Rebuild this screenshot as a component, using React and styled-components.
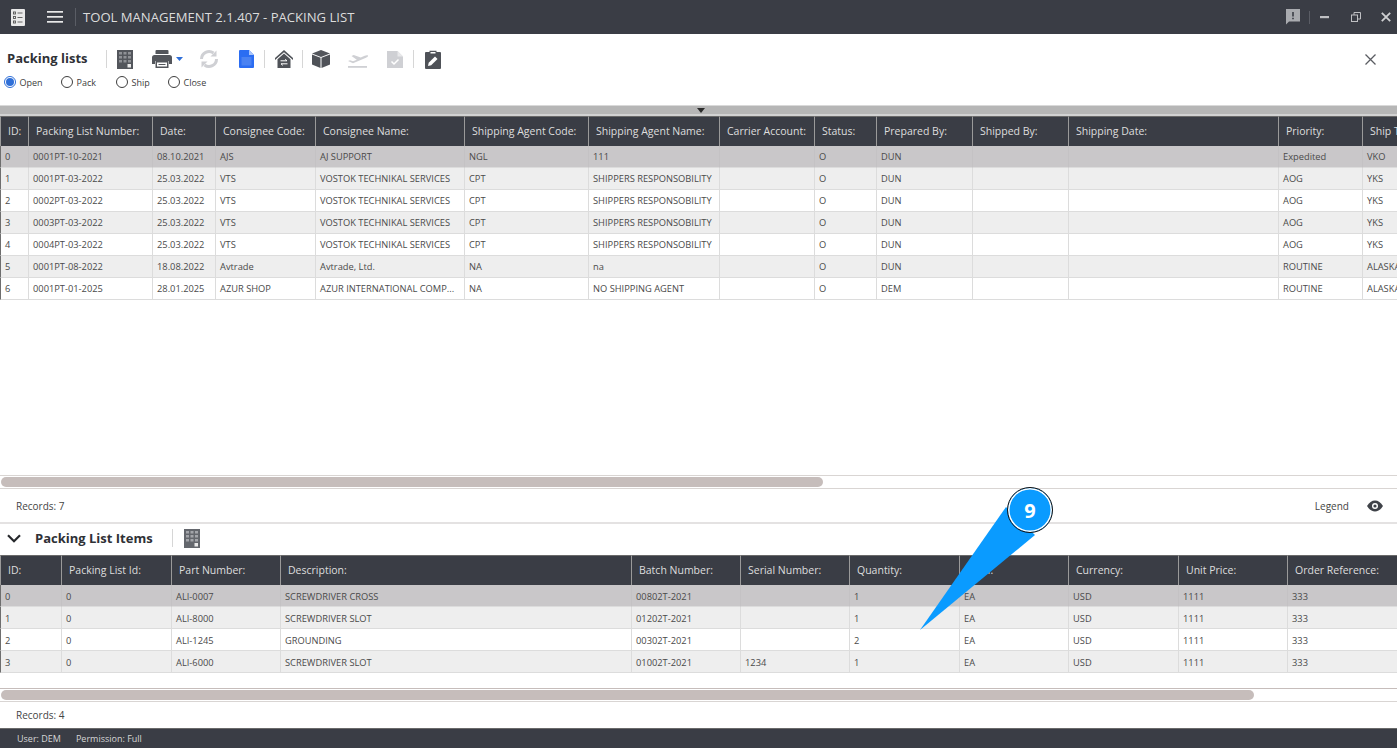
import React from "react";
import styled, { createGlobalStyle } from "styled-components";

const Global = createGlobalStyle`
  html, body { margin: 0; padding: 0; background: #fff; overflow: hidden; }
  body { font-family: "Open Sans", "Noto Sans", "Liberation Sans", sans-serif; }
  * { box-sizing: border-box; }
`;

const Page = styled.div`
  position: relative;
  width: 1397px;
  height: 750px;
  display: flex;
  flex-direction: column;
  overflow: hidden;
`;

const TitleBar = styled.header`
  height: 34px;
  flex: none;
  background: #3a3d45;
  display: flex;
  align-items: center;
  padding-left: 11px;
  color: #dcdcdc;
`;
const TitleText = styled.div`
  font-size: 13.1px;
  margin-left: 7px;
  white-space: nowrap;
`;
const BarSep = styled.span`
  width: 1px;
  height: ${(p) => p.$h || 18}px;
  background: ${(p) => p.$c || "#5a5d65"};
  margin: 0 ${(p) => p.$mr ?? 0}px 0 ${(p) => p.$ml ?? 0}px;
  flex: none;
`;
const WinControls = styled.div`
  margin-left: auto;
  display: flex;
  align-items: center;
  padding-right: 6px;
`;

const Toolbar = styled.section`
  height: 71px;
  flex: none;
  display: flex;
  flex-direction: column;
`;
const ToolRow = styled.div`
  display: flex;
  align-items: center;
  height: 20px;
  margin-top: 15px;
  padding-left: 7px;
`;
const PanelTitle = styled.h2`
  margin: 0 0 2px;
  font-size: 13px;
  line-height: 18px;
  font-weight: 700;
  color: #2f3136;
  white-space: nowrap;
  width: 99px;
`;
const Tool = styled.span`
  display: inline-flex;
  align-items: center;
  flex: none;
  margin-left: ${(p) => p.$ml || 0}px;
`;
const ToolSep = styled.span`
  width: 1px;
  height: 18px;
  background: #d6d6d6;
  flex: none;
  margin-left: ${(p) => p.$ml || 0}px;
`;
const CloseBtn = styled.span`
  margin-left: auto;
  margin-right: 21px;
  display: inline-flex;
`;
const RadioRow = styled.div`
  display: flex;
  align-items: center;
  padding-left: 4px;
  margin-top: 6px;
  height: 14px;
`;
const RadioItem = styled.label`
  display: inline-flex;
  align-items: center;
  width: ${(p) => p.$w}px;
  font-size: 9px;
  color: #3d3d3d;
  gap: 3.5px;
`;
const RadioDot = styled.span`
  width: 12px;
  height: 12px;
  border-radius: 50%;
  border: 1px solid ${(p) => (p.$on ? "#2f6fd8" : "#3e3e3e")};
  background: #fff;
  display: inline-flex;
  align-items: center;
  justify-content: center;
  flex: none;
  &::after {
    content: "";
    width: 8px;
    height: 8px;
    border-radius: 50%;
    background: ${(p) => (p.$on ? "#2f6fd8" : "transparent")};
  }
`;

const Splitter = styled.div`
  height: 11px;
  flex: none;
  background: #b6b6b6;
  border-top: 1px solid #d9d9d9;
  border-bottom: 2px solid #d2d2d2;
  display: flex;
  justify-content: center;
  align-items: center;
  padding-left: 4px;
`;
const Caret = styled.span`
  width: 0;
  height: 0;
  border-left: 4px solid transparent;
  border-right: 4px solid transparent;
  border-top: 5px solid #2b2b2b;
`;

const TableBox = styled.div`
  height: ${(p) => p.$h}px;
  flex: none;
  overflow: hidden;
`;
const GridRow = styled.div`
  display: grid;
  grid-template-columns: ${(p) => p.$cols};
  width: max-content;
`;
const HeadRow = styled(GridRow)`
  height: 30px;
  background: #3a3d45;
`;
const HeadCell = styled.div`
  border-left: 1px solid #9a9a9a;
  border-top: 1px solid #6a6a6a;
  padding-left: 7px;
  font-size: 10.5px;
  line-height: 29px;
  color: #dedede;
  white-space: nowrap;
  overflow: hidden;
`;
const BodyRow = styled(GridRow)`
  height: 22px;
  background: ${(p) => (p.$sel ? "#c9c7c9" : p.$odd ? "#eeeeee" : "#ffffff")};
`;
const BodyCell = styled.div`
  border-left: 1px solid ${(p) => (p.$first ? "#6e6e6e" : p.$sel ? "#c4c2c4" : "#dcdcdc")};
  border-bottom: 1px solid #dcdcdc;
  padding: ${(p) => p.$top}px 0 0 4px;
  font-size: 9.3px;
  line-height: 21px;
  color: #4a4a4a;
  white-space: nowrap;
  overflow: hidden;
`;

const Track = styled.div`
  height: ${(p) => p.$h}px;
  flex: none;
  border-top: 1px solid ${(p) => p.$edge};
  border-bottom: 1px solid #d9d5d3;
  padding: 1px 0 1px 1px;
`;
const Thumb = styled.div`
  height: 100%;
  width: ${(p) => p.$w}px;
  background: #c6bdbb;
  border-radius: 6px;
`;
const RecordsBar = styled.div`
  height: ${(p) => p.$h}px;
  flex: none;
  display: flex;
  align-items: center;
  padding: 0 14px 0 16px;
  font-size: 10px;
  color: #454545;
`;
const Legend = styled.div`
  margin-left: auto;
  display: flex;
  align-items: center;
  gap: 18px;
`;
const SectionHead = styled.div`
  height: 33px;
  flex: none;
  border-top: 2px solid #e4e2e2;
  display: flex;
  align-items: center;
  padding: 0 0 3px 7px;
`;
const SectionTitle = styled.h3`
  margin: 0 0 0 14px;
  font-size: 13px;
  font-weight: 700;
  color: #2f3136;
  white-space: nowrap;
  width: 137px;
`;
const Spacer = styled.div`
  height: ${(p) => p.$h}px;
  flex: none;
`;
const StatusBar = styled.footer`
  height: 20px;
  flex: none;
  background: #3a3d45;
  border-top: 1px solid #6a6a6a;
  display: flex;
  align-items: center;
  padding-left: 17px;
  gap: 15px;
  font-size: 9px;
  color: #d6d6d6;
`;

const Callout = styled.div`
  position: absolute;
  left: 915px;
  top: 485px;
  width: 142px;
  height: 150px;
`;
const CalloutBadge = styled.div`
  position: absolute;
  left: 92px;
  top: 2px;
  width: 46px;
  height: 46px;
  border-radius: 50%;
  background: #0a9bff;
  border: 1px solid #111;
  box-shadow: inset 0 0 0 1.5px #fff;
  color: #fff;
  font-size: 20px;
  font-weight: 700;
  display: flex;
  align-items: center;
  justify-content: center;
`;

/* ---------- icons ---------- */
const ExcelIcon = ({ fill = "#53565c", cell = "#8f9196" }) => (
  <svg width="16" height="19" viewBox="0 0 16 19">
    <rect width="16" height="19" fill={fill} />
    <g fill={cell}>
      <rect x="2" y="2" width="3" height="2.5" /><rect x="6.500" y="2" width="3" height="2.5" /><rect x="11" y="2" width="3" height="2.5" />
      <rect x="2" y="6" width="3" height="2.5" /><rect x="6.500" y="6" width="3" height="2.5" /><rect x="11" y="6" width="3" height="2.5" />
      <rect x="2" y="10" width="3" height="2.5" /><rect x="6.500" y="10" width="3" height="2.5" /><rect x="11" y="10" width="3" height="2.5" />
    </g>
    <path d="M10.500 14h3.500v3.500h-3.500z" fill="#e8e8e8" />
  </svg>
);
const Printer = () => (
  <svg width="32" height="18" viewBox="0 0 32 18">
    <path d="M3.500 1a1 1 0 0 1 1-1h11a1 1 0 0 1 1 1v3h-13z" fill="#53565c" />
    <path d="M2.500 5h15a2.500 2.500 0 0 1 2.500 2.500V14h-3v-3H3v3H0V7.500A2.500 2.500 0 0 1 2.500 5z" fill="#53565c" />
    <path d="M3.500 11h13v7h-13z" fill="#53565c" />
    <path d="M5 12.500h10v4H5z" fill="#fff" />
    <path d="M6.500 14.500h7" stroke="#53565c" />
    <path d="M24 7h7l-3.500 4z" fill="#2f6fd8" />
  </svg>
);
const Refresh = () => (
  <svg width="20" height="20" viewBox="0 0 20 20" fill="none">
    <path d="M2.500 10a7.500 7.500 0 0 1 12-6" stroke="#cfd0d4" strokeWidth="3" />
    <path d="M17.500 10a7.500 7.500 0 0 1-12 6" stroke="#cfd0d4" strokeWidth="3" />
    <path d="M17.500 1.500v6h-6z" fill="#cfd0d4" />
    <path d="M2.500 18.500v-6h6z" fill="#cfd0d4" />
  </svg>
);
const BlueDoc = () => (
  <svg width="15" height="18" viewBox="0 0 15 18">
    <path d="M0 1a1 1 0 0 1 1-1h9l5 5v12a1 1 0 0 1-1 1H1a1 1 0 0 1-1-1z" fill="#2b6df2" />
    <path d="M2.500 7h10v8.500h-10z" fill="#4a82f2" />
    <path d="M10 0l5 5h-5z" fill="#a9c5fa" />
  </svg>
);
const HomeSwap = () => (
  <svg width="18" height="18" viewBox="0 0 18 18">
    <path d="M9 0L18 8v2L9 2.200 0 10V8z" fill="#4f5258" />
    <path d="M9 3.500l6.500 5.700V18h-13V9.200z" fill="#4f5258" />
    <path d="M5.500 10.800h6.500M12 10.800l-1.800-1.500M12.500 13.800H6M6 13.800l1.800 1.500" stroke="#fff" strokeWidth="1" fill="none" />
  </svg>
);
const Box = () => (
  <svg width="18" height="18" viewBox="0 0 18 18">
    <path d="M9 0l9 3.500L9 7 0 3.500z" fill="#53565c" />
    <path d="M0 4.500l8.500 3.300V18L0 14.600z" fill="#4f5258" />
    <path d="M18 4.500L9.500 7.800V18L18 14.600z" fill="#4f5258" />
  </svg>
);
const Plane = () => (
  <svg width="20" height="17" viewBox="0 0 20 17">
    <path d="M0 10l2-.8 3 1.100 3.800-1.600L3.500 5l2.200-.9 7 2.500 4-1.800C18 4.200 19.500 4 20 4.600c.2.700-.7 1.500-2 2.100L5 12.300z" fill="#cfd0d4" />
    <rect x="0" y="15" width="19" height="1.800" fill="#cfd0d4" />
  </svg>
);
const DocCheck = () => (
  <svg width="16" height="17" viewBox="0 0 16 17">
    <path d="M0 0h10.500L16 5.500V17H0z" fill="#cfd0d4" />
    <path d="M10.500 0L16 5.500h-5.500z" fill="#e8e8ea" />
    <path d="M4.500 10.500l2.500 2.500 4.500-4.500" stroke="#fff" strokeWidth="1.500" fill="none" />
  </svg>
);
const Clip = () => (
  <svg width="16" height="19" viewBox="0 0 16 19">
    <path d="M1 2h3.500V.8h7V2H15a1 1 0 0 1 1 1v15a1 1 0 0 1-1 1H1a1 1 0 0 1-1-1V3a1 1 0 0 1 1-1z" fill="#4f5258" />
    <path d="M5.500 2h5v1.500h-5z" fill="#fff" />
    <path d="M3 16l.7-3.200 6.300-6.300 2.500 2.500L6.200 15.300z" fill="#fff" />
  </svg>
);
const AppIcon = () => (
  <svg width="14" height="17" viewBox="0 0 14 17">
    <rect width="14" height="17" rx="1" fill="#e9e9e9" />
    <g stroke="#555" strokeWidth=".9" fill="none">
      <rect x="2.500" y="3" width="2" height="2" /><rect x="2.500" y="7.500" width="2" height="2" /><rect x="2.500" y="12" width="2" height="2" />
      <path d="M6.500 4h5M6.500 8.500h5M6.500 13h5" />
    </g>
  </svg>
);
const Burger = () => (
  <svg width="16" height="12" viewBox="0 0 16 12" fill="#e8e8e8">
    <rect width="16" height="1.700" /><rect y="5" width="16" height="1.700" /><rect y="10" width="16" height="1.700" />
  </svg>
);
const Chat = () => (
  <svg width="14" height="16" viewBox="0 0 14 16">
    <path d="M0 0h14v12.500H3L0 15.500z" fill="#a9abaf" />
    <path d="M6.200 3h1.600v4.500H6.200zM6.200 8.700h1.600v1.600H6.200z" fill="#3a3d45" />
  </svg>
);
const Minim = () => (
  <svg width="9" height="3" viewBox="0 0 9 3"><rect width="9" height="2.200" fill="#bfc0c3" /></svg>
);
const Restore = () => (
  <svg width="10" height="10" viewBox="0 0 10 10" fill="none" stroke="#bfc0c3" strokeWidth="1">
    <rect x=".5" y="3" width="6" height="6.500" />
    <path d="M3 3V.5h6.500V7H6.500" />
  </svg>
);
const WinX = () => (
  <svg width="10" height="10" viewBox="0 0 10 10" stroke="#cfd0d2" strokeWidth="1.800">
    <path d="M.8.8l8.400 8.400M9.200.8L.8 9.200" />
  </svg>
);
const PanelX = () => (
  <svg width="11" height="11" viewBox="0 0 11 11" stroke="#5a5c62" strokeWidth="1.300">
    <path d="M.5.500l10 10M10.500.500l-10 10" />
  </svg>
);
const Eye = () => (
  <svg width="16" height="12" viewBox="0 0 16 12">
    <path d="M0 6c2-3.500 5-5.500 8-5.500S14 2.500 16 6c-2 3.500-5 5.500-8 5.500S2 9.500 0 6z" fill="#3f4248" />
    <circle cx="8" cy="6" r="3" fill="#fff" />
    <circle cx="8" cy="6" r="1.600" fill="#3f4248" />
  </svg>
);
const Chevron = () => (
  <svg width="14" height="9" viewBox="0 0 14 9" fill="none" stroke="#26282c" strokeWidth="2.200">
    <path d="M1 1.200l6 6 6-6" />
  </svg>
);

/* ---------- data ---------- */
const listCols = "28px 124px 63px 100px 149px 124px 131px 95px 62px 96px 96px 210px 84px 120px";
const listHead = ["ID:", "Packing List Number:", "Date:", "Consignee Code:", "Consignee Name:", "Shipping Agent Code:", "Shipping Agent Name:", "Carrier Account:", "Status:", "Prepared By:", "Shipped By:", "Shipping Date:", "Priority:", "Ship To:"];
const vts = ["25.03.2022", "VTS", "VOSTOK TECHNIKAL SERVICES", "CPT", "SHIPPERS RESPONSOBILITY", "", "O", "DUN", "", "", "AOG", "YKS"];
const listRows = [
  ["0", "0001PT-10-2021", "08.10.2021", "AJS", "AJ SUPPORT", "NGL", "111", "", "O", "DUN", "", "", "Expedited", "VKO"],
  ["1", "0001PT-03-2022", ...vts],
  ["2", "0002PT-03-2022", ...vts],
  ["3", "0003PT-03-2022", ...vts],
  ["4", "0004PT-03-2022", ...vts],
  ["5", "0001PT-08-2022", "18.08.2022", "Avtrade", "Avtrade, Ltd.", "NA", "na", "", "O", "DUN", "", "", "ROUTINE", "ALASKA"],
  ["6", "0001PT-01-2025", "28.01.2025", "AZUR SHOP", "AZUR INTERNATIONAL COMP...", "NA", "NO SHIPPING AGENT", "", "O", "DEM", "", "", "ROUTINE", "ALASKA"],
];
const itemCols = "61px 110px 109px 351px 109px 109px 110px 109px 110px 109px 120px";
const itemHead = ["ID:", "Packing List Id:", "Part Number:", "Description:", "Batch Number:", "Serial Number:", "Quantity:", "UoM:", "Currency:", "Unit Price:", "Order Reference:"];
const itemRows = [
  ["0", "0", "ALI-0007", "SCREWDRIVER CROSS", "00802T-2021", "", "1", "EA", "USD", "1111", "333"],
  ["1", "0", "ALI-8000", "SCREWDRIVER SLOT", "01202T-2021", "", "1", "EA", "USD", "1111", "333"],
  ["2", "0", "ALI-1245", "GROUNDING", "00302T-2021", "", "2", "EA", "USD", "1111", "333"],
  ["3", "0", "ALI-6000", "SCREWDRIVER SLOT", "01002T-2021", "1234", "1", "EA", "USD", "1111", "333"],
];

const DataTable = ({ cols, head, rows, height, textTop }) => (
  <TableBox $h={height}>
    <HeadRow $cols={cols}>
      {head.map((h) => <HeadCell key={h}>{h}</HeadCell>)}
    </HeadRow>
    {rows.map((r, i) => (
      <BodyRow key={i} $cols={cols} $sel={i === 0} $odd={i % 2 === 1}>
        {r.map((c, j) => <BodyCell key={j} $top={textTop} $first={j === 0} $sel={i === 0}>{c}</BodyCell>)}
      </BodyRow>
    ))}
  </TableBox>
);

export default function App() {
  return (
    <Page>
      <Global />
      <TitleBar>
        <AppIcon />
        <Tool $ml={22}><Burger /></Tool>
        <BarSep $ml={12} />
        <TitleText>TOOL MANAGEMENT 2.1.407 - PACKING LIST</TitleText>
        <WinControls>
          <Chat />
          <BarSep $ml={9} $mr={10} $h={13} />
          <Minim />
          <Tool $ml={22}><Restore /></Tool>
          <Tool $ml={20}><WinX /></Tool>
        </WinControls>
      </TitleBar>

      <Toolbar>
        <ToolRow>
          <PanelTitle>Packing lists</PanelTitle>
          <ToolSep />
          <Tool $ml={10}><ExcelIcon /></Tool>
          <Tool $ml={19}><Printer /></Tool>
          <Tool $ml={15}><Refresh /></Tool>
          <Tool $ml={20}><BlueDoc /></Tool>
          <ToolSep $ml={10} />
          <Tool $ml={10}><HomeSwap /></Tool>
          <ToolSep $ml={9} />
          <Tool $ml={9}><Box /></Tool>
          <Tool $ml={18}><Plane /></Tool>
          <Tool $ml={19}><DocCheck /></Tool>
          <ToolSep $ml={10} />
          <Tool $ml={11}><Clip /></Tool>
          <CloseBtn><PanelX /></CloseBtn>
        </ToolRow>
        <RadioRow>
          <RadioItem $w={57}><RadioDot $on />Open</RadioItem>
          <RadioItem $w={55}><RadioDot />Pack</RadioItem>
          <RadioItem $w={52}><RadioDot />Ship</RadioItem>
          <RadioItem $w={60}><RadioDot />Close</RadioItem>
        </RadioRow>
      </Toolbar>

      <Splitter><Caret /></Splitter>

      <DataTable cols={listCols} head={listHead} rows={listRows} height={359} textTop={0} />
      <Track $h={14} $edge="#d9d5d3"><Thumb $w={822} /></Track>
      <RecordsBar $h={33}>
        Records: 7
        <Legend>Legend<Eye /></Legend>
      </RecordsBar>

      <SectionHead>
        <Chevron />
        <SectionTitle>Packing List Items</SectionTitle>
        <ToolSep />
        <Tool $ml={11}><ExcelIcon fill="#64676d" cell="#a3a5aa" /></Tool>
      </SectionHead>

      <DataTable cols={itemCols} head={itemHead} rows={itemRows} height={118} textTop={1} />
      <Spacer $h={15} />
      <Track $h={14} $edge="#c6bdbb"><Thumb $w={1253} /></Track>
      <RecordsBar $h={26}>Records: 4</RecordsBar>

      <StatusBar>
        <span>User: DEM</span>
        <span>Permission: Full</span>
      </StatusBar>

      <Callout>
        <svg width="142" height="150" viewBox="0 0 142 150">
          <path d="M5 145L91 22L120 50z" fill="#0a9bff" />
        </svg>
        <CalloutBadge>9</CalloutBadge>
      </Callout>
    </Page>
  );
}
